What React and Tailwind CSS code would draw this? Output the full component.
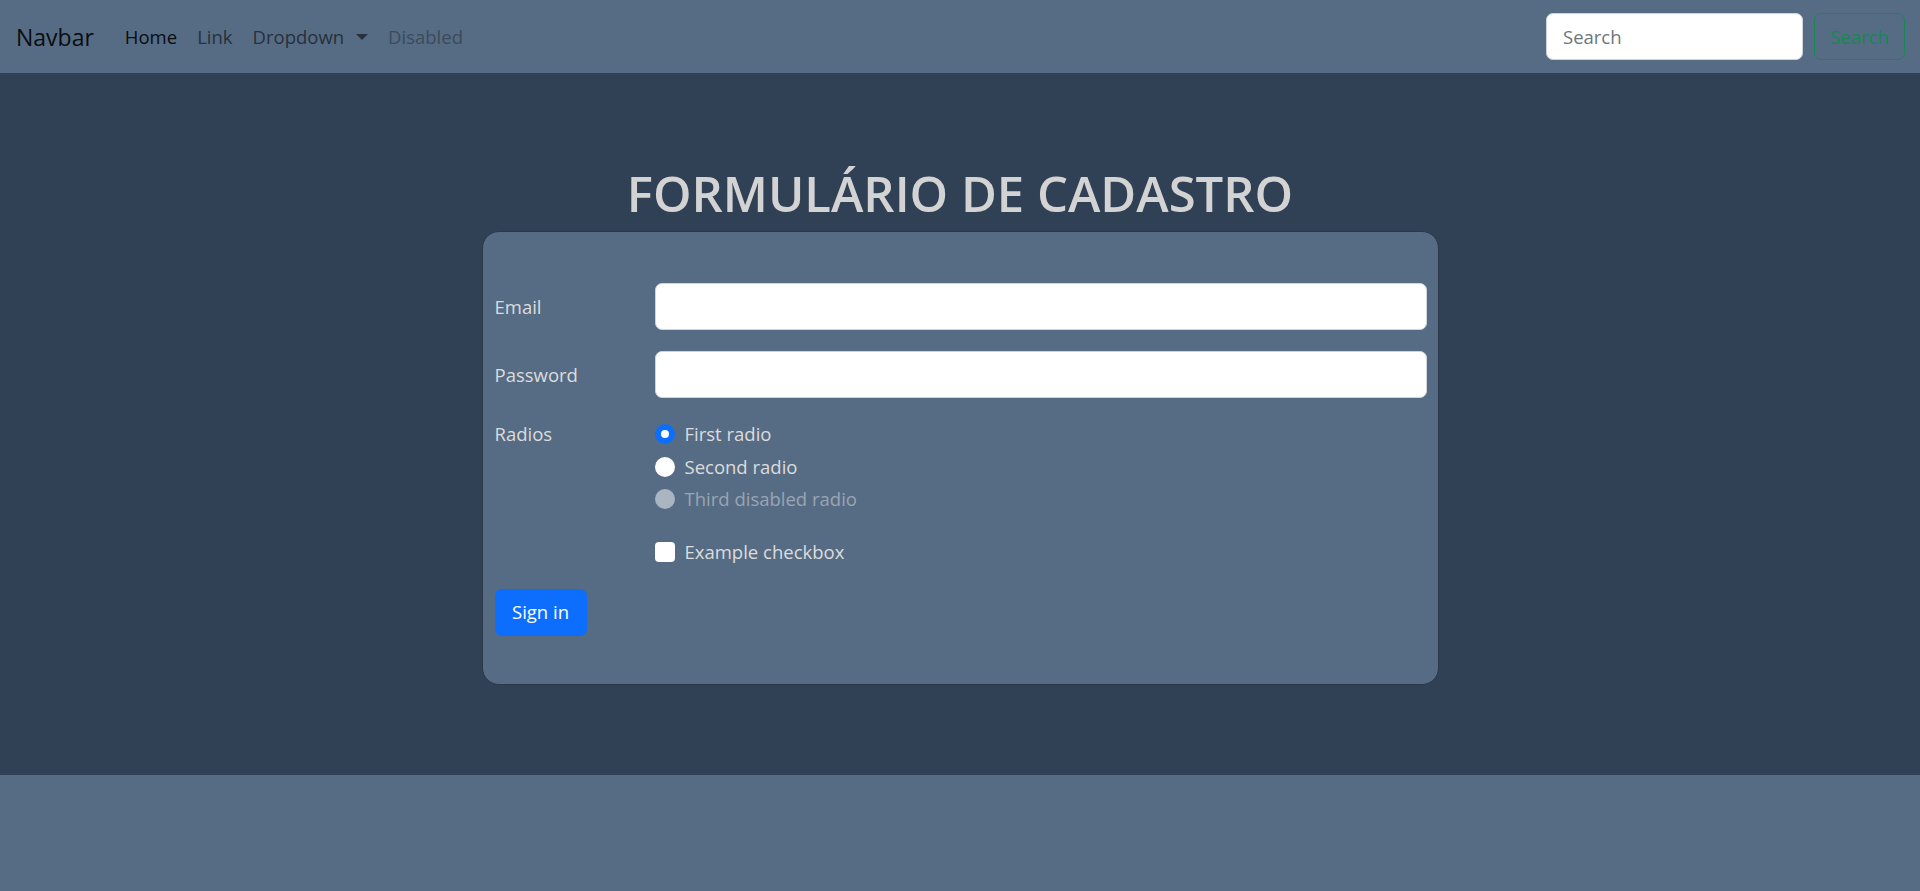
import React from 'react';

const NavBar = () => (
    <nav className="h-[73px] bg-[#566c84] flex items-center justify-between pl-[16px] pr-[15px]">
        <div className="flex items-center">
            <span className="text-[23px] text-[#0b0d10] mr-[21px] leading-[30px]">Navbar</span>
            <ul className="flex items-center text-[18.5px] leading-[30px]">
                <li className="px-[10px] text-[#0a0c0f]">Home</li>
                <li className="px-[10px] text-[#27303b]">Link</li>
                <li className="px-[10px] text-[#27303b] flex items-center">
                    Dropdown
                    <span className="ml-[12px] w-0 h-0 border-x-[6px] border-x-transparent border-t-[6px] border-t-[#27303b]"></span>
                </li>
                <li className="px-[10px] text-[#3d4a5a]">Disabled</li>
            </ul>
        </div>
        <form className="flex items-center gap-[11px]">
            <input
                type="search"
                placeholder="Search"
                className="w-[257px] h-[47px] bg-white rounded-[7px] border border-[#ced4da] px-[16px] text-[18.5px] text-[#212529] placeholder:text-[#6c757d] outline-none"
            />
            <button type="button" className="h-[47px] w-[91px] rounded-[7px] border border-[#198754] text-[#198754] text-[18.5px]">Search</button>
        </form>
    </nav>
);

const Radio = ({ label, checked, disabled }) => (
    <div className="flex items-center h-[30px] mb-[2.5px]">
        {checked ? (
            <span className="w-[20px] h-[20px] rounded-full bg-[#0d6efd] flex items-center justify-center">
                <span className="w-[8px] h-[8px] rounded-full bg-white"></span>
            </span>
        ) : (
            <span className={`w-[20px] h-[20px] rounded-full ${disabled ? 'bg-[#aab5c1]' : 'bg-white'}`}></span>
        )}
        <span className={`ml-[10px] ${disabled ? 'text-[#99a5b2]' : 'text-[#dcdcdc]'}`}>{label}</span>
    </div>
);

export default function App() {
    return (
        <div className="min-h-[891px] flex flex-col bg-[#566c84]" style={{ fontFamily: '"Open Sans", "Noto Sans", sans-serif' }}>
            <NavBar />

            <main className="h-[702px] bg-[#304155] flex flex-col items-center pt-[90px]">
                <h1 className="text-[49px] leading-[60px] font-semibold text-[#d3d3d3] mb-[8px]">FORMULÁRIO DE CADASTRO</h1>

                <div className="w-[957px] h-[454px] bg-[#566c84] rounded-[17px] border border-[#2a3849] pt-[51px] pl-[12px] pr-[11px] text-[18.5px] leading-[30px] text-[#dcdcdc]">
                    {/* Email */}
                    <div className="flex items-center mb-[21px]">
                        <label className="w-[160px]">Email</label>
                        <input type="email" className="flex-1 h-[47px] bg-white rounded-[7px] border border-[#ced4da] outline-none" />
                    </div>

                    {/* Password */}
                    <div className="flex items-center mb-[21px]">
                        <label className="w-[160px]">Password</label>
                        <input type="password" className="flex-1 h-[47px] bg-white rounded-[7px] border border-[#ced4da] outline-none" />
                    </div>

                    {/* Radios */}
                    <div className="flex mb-[20px]">
                        <span className="w-[160px] leading-[30px]">Radios</span>
                        <div className="flex flex-col">
                            <Radio label="First radio" checked />
                            <Radio label="Second radio" />
                            <Radio label="Third disabled radio" disabled />
                        </div>
                    </div>

                    {/* Checkbox */}
                    <div className="flex mb-[22px]">
                        <span className="w-[160px]"></span>
                        <div className="flex items-center h-[30px]">
                            <span className="w-[20px] h-[20px] rounded-[4px] bg-white"></span>
                            <span className="ml-[10px]">Example checkbox</span>
                        </div>
                    </div>

                    <button type="button" className="w-[92px] h-[47px] rounded-[7px] bg-[#0d6efd] text-white text-[18.5px]">Sign in</button>
                </div>
            </main>

            <footer className="h-[116px] bg-[#566c84]"></footer>
        </div>
    );
}
